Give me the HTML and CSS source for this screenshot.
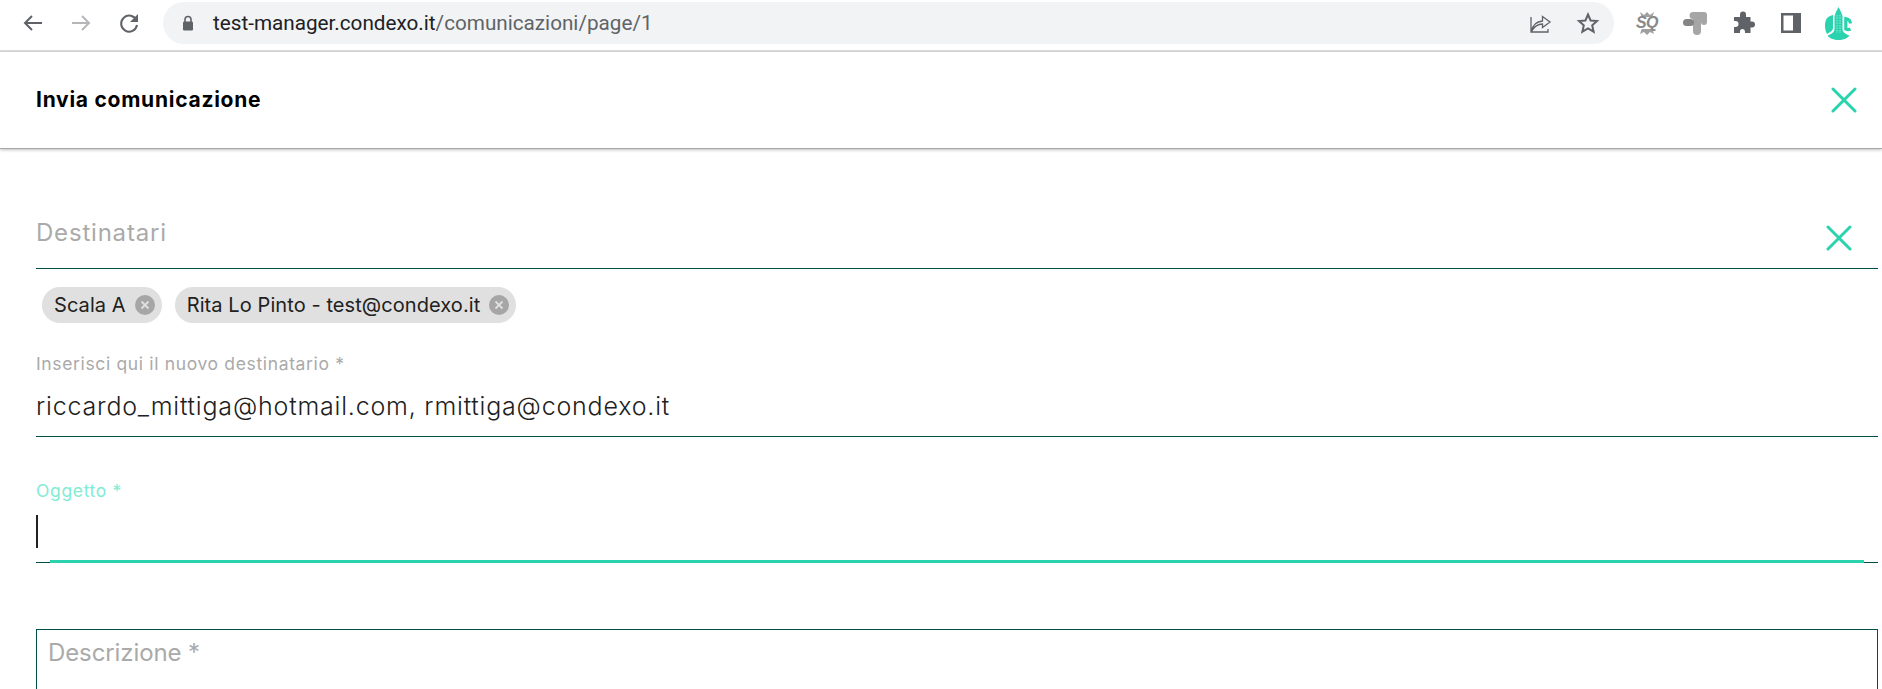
FILE: index.html
```html
<!DOCTYPE html>
<html lang="it">

<head>
    <meta charset="UTF-8">
    <meta name="viewport" content="width=device-width, initial-scale=1.0">
    <title>Invia comunicazione</title>
    <link rel="stylesheet" href="styles.css">
</head>

<body>

    <div class="toolbar">
        <div class="nav-buttons">
            <svg class="nav-icon" viewBox="0 0 24 24"><path d="M21 12H4M11 5l-7 7 7 7" fill="none" stroke="#5f6368" stroke-width="2"/></svg>
            <svg class="nav-icon" viewBox="0 0 24 24"><path d="M3 12h17M13 5l7 7-7 7" fill="none" stroke="#b4b6b9" stroke-width="2"/></svg>
            <svg class="nav-icon" viewBox="0 0 24 24"><path d="M19.500 9.500A8 8 0 1 0 20 14" fill="none" stroke="#5f6368" stroke-width="2"/><path d="M21 3v8h-8z" fill="#5f6368"/></svg>
        </div>
        <div class="omnibox">
            <svg class="lock" viewBox="0 0 12 16"><path d="M3 7V4.500a3 3 0 0 1 6 0V7" fill="none" stroke="#5f6368" stroke-width="1.600"/><rect x="1" y="6.500" width="10" height="9" rx="1.200" fill="#5f6368"/></svg>
            <span class="url">test-manager.condexo.it<span class="url-path">/comunicazioni/page/1</span></span>
            <svg class="omni-icon share" viewBox="0 0 24 24"><path d="M3 6v15h17v-3M3.500 20.500c1-6 5-10 11-10.500V5.500L22 11l-7.500 5.500v-3.500c-5 0-8 2-11 7.500z" fill="none" stroke="#5f6368" stroke-width="1.300"/></svg>
            <svg class="omni-icon star" viewBox="0 0 24 24"><path d="M12 3.500l2.600 6 6.400.6-4.800 4.200 1.400 6.300-5.600-3.300-5.600 3.300 1.400-6.300L3 10.100l6.400-.6z" fill="none" stroke="#5f6368" stroke-width="2"/></svg>
        </div>
        <div class="extensions">
            <div class="ext ext-sq">
                <svg class="sq-burst" viewBox="0 0 24 24"><path d="M5 1l4 3 3-3 3 3 4-3-2 6H7zM7 17h10l2 6-4-2-3 3-3-3-4 2z" fill="#a0a0a0"/></svg>
                <span class="sq-text">SQ</span>
            </div>
            <svg class="ext" viewBox="0 0 24 24"><path d="M10 1h11a3 3 0 0 1 3 3v7a3 3 0 0 1-6 0V8h-8a3.500 3.500 0 0 1 0-7z" fill="#a6a6a6"/><path d="M10 8h8v12a4 4 0 0 1-8 0z" fill="#a6a6a6"/><rect x="0" y="8" width="11" height="7" rx="3.500" fill="#858585"/></svg>
            <svg class="ext" viewBox="0 0 24 24"><path d="M9 3.500a3 3 0 0 1 6 0V6h4.500v4.500h1.500a3 3 0 0 1 0 6h-1.500V22H14v-1.500a2.500 2.500 0 0 0-5 0V22H3v-6h1.500a3 3 0 0 0 0-6H3V6h6z" fill="#5f6368"/></svg>
            <svg class="ext" viewBox="0 0 24 24"><path d="M2 2h20v20H2zM4.500 4.500v15H14v-15z" fill="#5f6368" fill-rule="evenodd"/></svg>
            <svg class="ext-logo" viewBox="0 0 27 33">
                <path d="M13.500 0L16 5l1.500 4v13c0 3 2.500 5 7 6.500-2 3-6.500 4.500-11 4.500S4.500 31.500 2.500 28.500c4.500-1.500 7-3.500 7-6.500V9L11 5z" fill="#2ad2ae"/>
                <path d="M8 8v13c0 2.500-2.500 4-6 6C.7 24.500 0 22 0 18.500 0 12 3 9 8 8z" fill="#2ad2ae"/>
                <path d="M25.500 16.500A5.500 6 0 0 0 20.800 11.500V22A5 5 0 0 0 25.500 22" fill="none" stroke="#2ad2ae" stroke-width="3.200"/>
                <path d="M12 8v18M15 8v18" stroke="#a5ecda" stroke-width=".9" stroke-dasharray="1.500 1" fill="none"/>
            </svg>
        </div>
    </div>

    <div class="modal-header">
        <h1>Invia comunicazione</h1>
        <svg class="close-icon" viewBox="0 0 26 26"><path d="M2 2l22 22M24 2L2 24" fill="none" stroke="#2ad2ae" stroke-width="3" stroke-linecap="round"/></svg>
    </div>

    <form class="modal-form">
        <div class="recipients-row">
            <span class="placeholder placeholder-wide">Destinatari</span>
            <svg class="close-icon" viewBox="0 0 26 26"><path d="M2 2l22 22M24 2L2 24" fill="none" stroke="#2ad2ae" stroke-width="3" stroke-linecap="round"/></svg>
        </div>

        <div class="chips">
            <span class="chip">Scala A
                <svg class="chip-remove" viewBox="0 0 20 20"><circle cx="10" cy="10" r="10" fill="#a6a6a6"/><path d="M6.500 6.500l7 7M13.500 6.500l-7 7" stroke="#e0e0e0" stroke-width="1.800"/></svg>
            </span>
            <span class="chip">Rita Lo Pinto - test@condexo.it
                <svg class="chip-remove" viewBox="0 0 20 20"><circle cx="10" cy="10" r="10" fill="#a6a6a6"/><path d="M6.500 6.500l7 7M13.500 6.500l-7 7" stroke="#e0e0e0" stroke-width="1.800"/></svg>
            </span>
        </div>

        <div class="field field-recipient">
            <label class="field-label">Inserisci qui il nuovo destinatario *</label>
            <div class="field-value">riccardo_mittiga@hotmail.com, rmittiga@condexo.it</div>
        </div>

        <div class="field field-subject">
            <label class="field-label">Oggetto *</label>
            <div class="field-value"><span class="caret"></span></div>
            <div class="focus-line"></div>
        </div>

        <div class="description">
            <span class="placeholder">Descrizione *</span>
        </div>
    </form>

</body>

</html>
```

FILE: styles.css
```css
html,
body {
    height: 100%;
    overflow: hidden;
}

body {
    background-color: #fff;
    color: #212121;
    font-family: Inter, "Open Sans", sans-serif;
    margin: 0;
    padding: 0;
}

.toolbar {
    display: flex;
    align-items: center;
    height: 50px;
    border-bottom: 2px solid #dcdcdc;
}

.nav-buttons {
    display: flex;
    gap: 24px;
    padding-left: 21px;
    width: 163px;
    box-sizing: border-box;
    margin-top: -4px;
}

.nav-icon {
    width: 24px;
    height: 24px;
}

.omnibox {
    display: flex;
    align-items: center;
    width: 1451px;
    height: 42px;
    margin-top: -4px;
    box-sizing: border-box;
    background-color: #f1f3f4;
    border-radius: 21px;
    padding-left: 19px;
}

.lock {
    width: 12px;
    height: 16px;
    margin-right: 19px;
}

.url {
    font-family: Roboto, sans-serif;
    font-size: 20.700px;
    color: #202124;
    flex: 1;
}

.url-path {
    color: #5f6368;
}

.omni-icon {
    width: 24px;
    height: 24px;
}

.share {
    margin-right: 24px;
}

.star {
    margin-right: 14px;
}

.extensions {
    display: flex;
    align-items: center;
    gap: 24px;
    padding-left: 21px;
    margin-top: -4px;
}

.ext {
    width: 24px;
    height: 24px;
}

.ext-sq {
    position: relative;
    display: flex;
    align-items: center;
    justify-content: center;
}

.sq-burst {
    position: absolute;
    inset: 0;
}

.sq-text {
    position: relative;
    font-family: "Liberation Sans", sans-serif;
    font-size: 16px;
    font-weight: 700;
    font-style: italic;
    letter-spacing: -0.500px;
    color: #8a8a8a;
    background-color: #fff;
    line-height: 12px;
}

.ext-logo {
    width: 27px;
    height: 33px;
    margin-left: -2px;
}

.modal-header {
    display: flex;
    align-items: center;
    justify-content: space-between;
    height: 96px;
    padding: 0 25px 0 36px;
    border-bottom: 1px solid #a8a8a8;
    box-shadow: 0 1px 3px rgba(0, 0, 0, 0.25);
}

h1 {
    margin: 0 0 2px;
    font-size: 21px;
    font-weight: 700;
    letter-spacing: 0.740px;
    color: #000;
}

.close-icon {
    width: 26px;
    height: 26px;
}

.modal-form {
    display: flex;
    flex-direction: column;
    padding: 0 4px 0 36px;
}

.placeholder {
    font-size: 24px;
    font-weight: 400;
    letter-spacing: -0.100px;
    line-height: 30px;
    color: #aaa;
}

.placeholder-wide {
    letter-spacing: 0.800px;
}

.recipients-row {
    display: flex;
    justify-content: space-between;
    align-items: flex-start;
    height: 50px;
    padding: 69px 26px 0 0;
    border-bottom: 1px solid #005049;
}

.recipients-row .close-icon {
    margin-top: 7px;
}

.chips {
    display: flex;
    gap: 13px;
    padding: 18px 0 0 6px;
}

.chip {
    display: flex;
    align-items: center;
    gap: 9px;
    height: 36px;
    padding: 0 7px 0 12px;
    border-radius: 18px;
    background-color: #e0e0e0;
    font-size: 20px;
    font-weight: 400;
    letter-spacing: 0.080px;
    color: #212121;
}

.chip-remove {
    width: 20px;
    height: 20px;
}

.field {
    position: relative;
    border-bottom: 1px solid #005049;
}

.field-recipient {
    margin-top: 29px;
    padding-bottom: 13px;
}

.field-subject {
    margin-top: 42px;
    padding-bottom: 13px;
}

.field-label {
    display: block;
    font-size: 17.500px;
    font-weight: 400;
    letter-spacing: 0.650px;
    line-height: 24px;
    color: #aaa;
}

.field-value {
    height: 34px;
    margin-top: 13px;
    font-size: 25px;
    font-weight: 300;
    letter-spacing: 0.800px;
    line-height: 34px;
}

.field-subject .field-label {
    color: #82ecd3;
}

.field-subject .field-value {
    margin-top: 12px;
}

.caret {
    display: block;
    width: 2px;
    height: 33px;
    background-color: #212121;
}

.focus-line {
    position: absolute;
    left: 14px;
    right: 14px;
    bottom: -1px;
    height: 3px;
    background-color: #2ad2ae;
}

.description {
    margin-top: 66px;
    height: 200px;
    padding: 8px 11px;
    border: 1px solid #005049;
}
```
